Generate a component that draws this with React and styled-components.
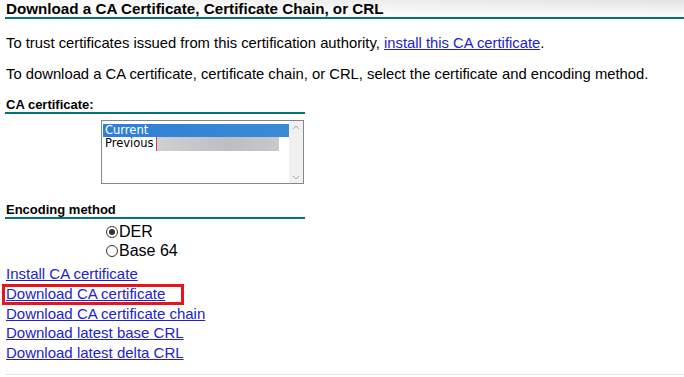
import React from "react";
import styled, { createGlobalStyle } from "styled-components";

const Global = createGlobalStyle`
  html, body { margin: 0; padding: 0; background: #fff; }
  body { font-family: "Liberation Sans", Arial, sans-serif; color: #000; }
`;

const Page = styled.div`
  width: 684px;
  height: 377px;
  overflow: hidden;
  position: relative;
  display: flex;
  flex-direction: column;
`;

const TitleBar = styled.div`
  background: linear-gradient(to bottom, rgba(255,255,255,0) 0%, #fff 95%),
    linear-gradient(to right, #ffffff 0%, #f0f0f0 40%, #e2e2e2 100%);
  padding-left: 5px;
`;

const Title = styled.h1`
  margin: 0;
  font-family: "Liberation Sans", Arial, sans-serif;
  font-size: 15.2px;
  font-weight: bold;
  line-height: 17px;
  height: 17px;
  padding-left: 1px;
  border-bottom: 2px solid #007573;
`;

const Para = styled.p`
  margin: ${(p) => p.$top}px 0 0 6px;
  font-size: 14.8px;
  line-height: 17px;
`;

const Link = styled.a`
  color: #2222cc;
  text-decoration: underline;
`;

const Section = styled.div`
  margin: ${(p) => p.$top}px 0 0 5px;
  width: 300px;
`;

const SectionHead = styled.div`
  font-size: 13px;
  font-weight: bold;
  line-height: 15px;
  padding-left: 1px;
  border-bottom: 2px solid #007573;
`;

const ListBox = styled.div`
  margin: 6px 0 0 96px;
  width: 201px;
  height: 62px;
  border: 1px solid #828790;
  display: flex;
  background: #fff;
`;

const Options = styled.div`
  flex: 1;
  padding: 3px 0 0 1px;
  display: flex;
  flex-direction: column;
`;

const Option = styled.div`
  font-family: "DejaVu Sans", Tahoma, sans-serif;
  font-size: 11.5px;
  line-height: 13px;
  height: 13px;
  padding-left: 2px;
  white-space: nowrap;
  display: flex;
  align-items: center;
  background: ${(p) => (p.$selected ? "linear-gradient(to right, #2f80d4, #3a8ad8)" : "transparent")};
  color: ${(p) => (p.$selected ? "#fff" : "#000")};
`;

const Redacted = styled.span`
  display: inline-block;
  width: 122px;
  height: 14px;
  margin-left: 2px;
  border-left: 1px solid #d04040;
  background: linear-gradient(to right, #cfd0d2, #bcbec1 60%, #c8c9cc);
`;

const Scrollbar = styled.div`
  width: 14px;
  background: #f0f0f0;
  display: flex;
  flex-direction: column;
  justify-content: space-between;
  align-items: center;
  padding: 4px 0 3px;
`;

const Radios = styled.div`
  margin: 5px 0 0 101px;
  display: flex;
  flex-direction: column;
  gap: 3px;
`;

const RadioRow = styled.label`
  display: flex;
  align-items: center;
  font-size: 16px;
  line-height: 16px;
`;

const RadioCircle = styled.span`
  width: 10px;
  height: 10px;
  border: 1px solid #333;
  border-radius: 50%;
  margin-right: 1px;
  display: flex;
  align-items: center;
  justify-content: center;
  &::after {
    content: "";
    width: 6px;
    height: 6px;
    border-radius: 50%;
    background: ${(p) => (p.$checked ? "#333" : "transparent")};
  }
`;

const LinkList = styled.div`
  margin: 5px 0 0 6px;
  display: flex;
  flex-direction: column;
`;

const ActionLink = styled(Link)`
  font-size: 15px;
  line-height: 19.8px;
  align-self: flex-start;
`;

const Highlight = styled.div`
  position: absolute;
  left: 2px;
  top: 284px;
  width: 176px;
  height: 15px;
  border: 3px solid #e8141c;
  pointer-events: none;
`;

const BottomRule = styled.div`
  position: absolute;
  left: 5px;
  right: 0;
  bottom: 2px;
  border-top: 1px solid #d8eeee;
`;

const Arrow = ({ up }) => (
  <svg width="8" height="5" viewBox="0 0 8 5">
    <path d={up ? "M1 4 L4 1 L7 4" : "M1 1 L4 4 L7 1"} fill="none" stroke="#a8a8a8" strokeWidth="1" />
  </svg>
);

export default function App() {
  return (
    <Page>
      <Global />
      <TitleBar>
        <Title>Download a CA Certificate, Certificate Chain, or CRL</Title>
      </TitleBar>
      <Para $top={16}>
        To trust certificates issued from this certification authority, <Link href="#">install this CA certificate</Link>.
      </Para>
      <Para $top={14}>
        To download a CA certificate, certificate chain, or CRL, select the certificate and encoding method.
      </Para>
      <Section $top={14}>
        <SectionHead>CA certificate:</SectionHead>
        <ListBox>
          <Options>
            <Option $selected>Current</Option>
            <Option>
              Previous<Redacted />
            </Option>
          </Options>
          <Scrollbar>
            <Arrow up />
            <Arrow />
          </Scrollbar>
        </ListBox>
      </Section>
      <Section $top={18}>
        <SectionHead>Encoding method</SectionHead>
        <Radios>
          <RadioRow>
            <RadioCircle $checked />
            DER
          </RadioRow>
          <RadioRow>
            <RadioCircle />
            Base 64
          </RadioRow>
        </Radios>
      </Section>
      <LinkList>
        <ActionLink href="#">Install CA certificate</ActionLink>
        <ActionLink href="#">Download CA certificate</ActionLink>
        <ActionLink href="#">Download CA certificate chain</ActionLink>
        <ActionLink href="#">Download latest base CRL</ActionLink>
        <ActionLink href="#">Download latest delta CRL</ActionLink>
      </LinkList>
      <Highlight />
      <BottomRule />
    </Page>
  );
}
